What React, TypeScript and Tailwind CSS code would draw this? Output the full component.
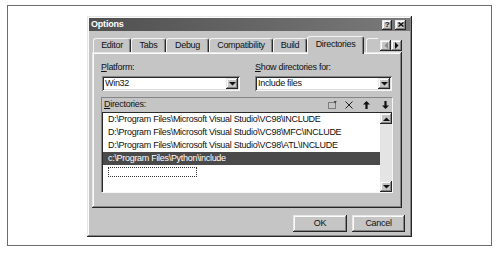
import React from 'react';

const raised =
  'shadow-[inset_-1px_-1px_#262626,inset_1px_1px_#e8e8e8,inset_-2px_-2px_#858585,inset_2px_2px_#fbfbfb]';
const sunken =
  'shadow-[inset_1px_1px_#858585,inset_-1px_-1px_#f7f7f7,inset_2px_2px_#2a2a2a,inset_-2px_-2px_#dcdcdc]';

type Dir = 'up' | 'down' | 'left' | 'right';

function Tri({ dir, color = '#111' }: { dir: Dir; color?: string }) {
  const pts: Record<Dir, string> = {
    up: '0,4 7,4 3.5,0.5',
    down: '0,0 7,0 3.5,3.5',
    left: '4,0 4,7 0.5,3.5',
    right: '0,0 0,7 3.5,3.5',
  };
  const vertical = dir === 'up' || dir === 'down';
  return (
    <svg width={vertical ? 7 : 4} height={vertical ? 4 : 7} viewBox={vertical ? '0 0 7 4' : '0 0 4 7'}>
      <polygon points={pts[dir]} fill={color} />
    </svg>
  );
}

function SmallBtn({ dir, w, h, color }: { dir: Dir; w: string; h: string; color?: string }) {
  return (
    <div className={`${w} ${h} bg-[#c5c5c5] flex items-center justify-center ${raised}`}>
      <Tri dir={dir} color={color} />
    </div>
  );
}

function Combo({ value }: { value: string }) {
  return (
    <div className={`h-[15px] bg-white flex items-center pl-[3px] pr-[2px] ${sunken}`}>
      <span className="flex-1">{value}</span>
      <SmallBtn dir="down" w="w-[12px]" h="h-[11px]" />
    </div>
  );
}

const tabs = [
  { label: 'Editor', w: 'w-[38px]' },
  { label: 'Tabs', w: 'w-[35px]' },
  { label: 'Debug', w: 'w-[43px]' },
  { label: 'Compatibility', w: 'w-[64px]' },
  { label: 'Build', w: 'w-[34px]' },
];

const dirs = [
  'D:\\Program Files\\Microsoft Visual Studio\\VC98\\INCLUDE',
  'D:\\Program Files\\Microsoft Visual Studio\\VC98\\MFC\\INCLUDE',
  'D:\\Program Files\\Microsoft Visual Studio\\VC98\\ATL\\INCLUDE',
];

function HeaderIcons() {
  return (
    <div className="flex items-center">
      {/* new */}
      <svg width="9" height="8" viewBox="0 0 9 8">
        <rect x="0.5" y="1.5" width="7" height="6" fill="none" stroke="#333" strokeDasharray="1 1" />
        <path d="M6 0.5 L8.5 0.5 M7.2 0 L7.2 2.5" stroke="#333" strokeWidth="0.8" />
      </svg>
      {/* delete */}
      <svg width="8" height="8" viewBox="0 0 8 8" className="ml-[8px]">
        <path d="M0.5 0.5 L7.5 7.5 M7.5 0.5 L0.5 7.5" stroke="#222" strokeWidth="1" />
      </svg>
      {/* up */}
      <svg width="7" height="8" viewBox="0 0 7 8" className="ml-[10px]">
        <path d="M3.5 0 L7 3.5 L4.6 3.5 L4.6 8 L2.4 8 L2.4 3.5 L0 3.5 Z" fill="#111" />
      </svg>
      {/* down */}
      <svg width="7" height="8" viewBox="0 0 7 8" className="ml-[12px]">
        <path d="M3.5 8 L7 4.5 L4.6 4.5 L4.6 0 L2.4 0 L2.4 4.5 L0 4.5 Z" fill="#111" />
      </svg>
    </div>
  );
}

function Dialog() {
  return (
    <div className={`w-[325px] h-[221px] bg-[#c5c5c5] p-[2px] flex flex-col ${raised}`}>
      {/* title bar */}
      <div className="h-[13px] flex items-center justify-between pl-[2px] pr-[4px] bg-linear-to-r from-[#505050] to-[#7a7a7a]">
        <span className="text-white font-bold text-[9px] leading-none tracking-[-0.2px]">Options</span>
        <div className="flex items-center gap-[3px]">
          <div className={`w-[10px] h-[10px] bg-[#c5c5c5] flex items-center justify-center font-bold text-[8px] leading-none ${raised}`}>
            ?
          </div>
          <div className={`w-[11px] h-[10px] bg-[#c5c5c5] flex items-center justify-center ${raised}`}>
            <svg width="6" height="5" viewBox="0 0 6 5">
              <path d="M0.5 0.5 L5.5 4.5 M5.5 0.5 L0.5 4.5" stroke="#111" strokeWidth="1.4" />
            </svg>
          </div>
        </div>
      </div>

      {/* tabs + panel */}
      <div className="ml-[3px] mt-[5px] w-[310px] flex flex-col">
        <div className="h-[16px] flex items-end pl-[1px]">
          {tabs.map((t) => (
            <div
              key={t.label}
              className={`${t.w} h-[14px] flex items-center justify-center border-t border-l border-[#f4f4f4] border-r border-r-[#2a2a2a] rounded-t-[3px] shadow-[inset_-1px_0_#858585]`}
            >
              {t.label}
            </div>
          ))}
          <div className="relative z-10 w-[57px] h-[18px] -mb-[2px] pb-[2px] bg-[#c5c5c5] flex items-center justify-center border-t border-l border-[#f4f4f4] border-r border-r-[#2a2a2a] rounded-t-[3px] shadow-[inset_-1px_0_#858585]">
            Directories
          </div>
          <div className="ml-[2px] w-[12px] h-[14px] border-t border-l border-[#f4f4f4] rounded-tl-[3px]" />
          <div className="ml-[2px] mb-[1px] flex">
            <SmallBtn dir="left" w="w-[11px]" h="h-[11px]" color="#8a8a8a" />
            <SmallBtn dir="right" w="w-[11px]" h="h-[11px]" />
          </div>
        </div>

        <div className={`h-[156px] pt-[10px] pl-[9px] pr-[9px] ${raised}`}>
          <div className="flex">
            <div className="w-[139px]">
              <div className="h-[11px] leading-[11px]">
                <span className="underline">P</span>latform:
              </div>
              <div className="mt-[3px] ml-[1px]">
                <Combo value="Win32" />
              </div>
            </div>
            <div className="ml-[15px] w-[137px]">
              <div className="h-[11px] leading-[11px]">
                <span className="underline">S</span>how directories for:
              </div>
              <div className="mt-[3px]">
                <Combo value="Include files" />
              </div>
            </div>
          </div>

          <div className="mt-[6px] w-[292px] border-t border-l border-[#858585] border-r border-b border-r-[#f7f7f7] border-b-[#f7f7f7]">
            <div className="h-[14px] flex items-center justify-between pl-[2px] pr-[3px]">
              <span>
                <span className="underline">D</span>irectories:
              </span>
              <HeaderIcons />
            </div>
            <div className="h-[80px] bg-white border-t border-l border-[#2a2a2a] flex">
              <div className="flex-1 flex flex-col">
                {dirs.map((d) => (
                  <div key={d} className="h-[13px] leading-[13px] pl-[5px] whitespace-nowrap">
                    {d}
                  </div>
                ))}
                <div className="h-[13px] leading-[13px] pl-[5px] bg-[#4a4a4a] text-white whitespace-nowrap">
                  c:\Program Files\Python\include
                </div>
                <div className="h-[13px] pt-[2px] pl-[5px]">
                  <div className="w-[89px] h-[10px] border border-dotted border-[#333]" />
                </div>
              </div>
              <div className="w-[12px] flex flex-col bg-[#e4e4e4]">
                <SmallBtn dir="up" w="w-[12px]" h="h-[11px]" />
                <div className="flex-1" />
                <SmallBtn dir="down" w="w-[12px]" h="h-[11px]" />
              </div>
            </div>
          </div>
        </div>
      </div>

      {/* buttons */}
      <div className="mt-[7px] flex justify-end gap-[5px] pr-[5px]">
        <div className={`w-[54px] h-[17px] bg-[#c5c5c5] flex items-center justify-center ${raised}`}>OK</div>
        <div className={`w-[53px] h-[17px] bg-[#c5c5c5] flex items-center justify-center ${raised}`}>Cancel</div>
      </div>
    </div>
  );
}

export default function App() {
  return (
    <div className="w-[497px] h-[254px] bg-white pt-[5px] pl-[7px] [font-family:'Liberation_Sans',Arial,sans-serif] text-[9px] tracking-[-0.3px] text-[#111]">
      <div className="w-[485px] h-[241px] border border-[#6b6b6b] pl-[79px] pt-[10px]">
        <Dialog />
      </div>
    </div>
  );
}
